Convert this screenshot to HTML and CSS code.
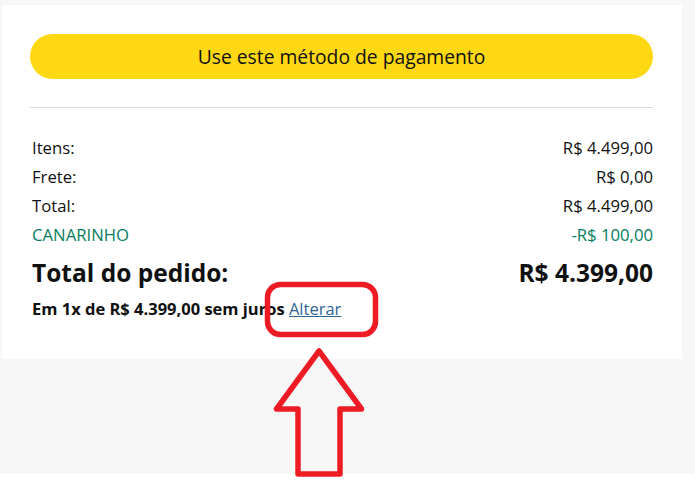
FILE: index.html
```html
<!DOCTYPE html>
<html lang="pt-BR">
<head>
    <meta charset="UTF-8">
    <meta name="viewport" content="width=device-width, initial-scale=1.0">
    <title>Resumo do pedido</title>
    <link rel="stylesheet" href="styles.css">
</head>
<body>
    <div class="page">
        <div class="summary">
            <button class="pay-button">Use este método de pagamento</button>
            <hr class="divider">

            <div class="line"><span>Itens:</span><span>R$ 4.499,00</span></div>
            <div class="line"><span>Frete:</span><span>R$ 0,00</span></div>
            <div class="line"><span>Total:</span><span>R$ 4.499,00</span></div>
            <div class="line promo"><span>CANARINHO</span><span>-R$ 100,00</span></div>

            <div class="line grand-total"><span>Total do pedido:</span><span>R$ 4.399,00</span></div>
            <p class="installments">Em 1x de R$ 4.399,00 sem juros <a href="#">Alterar</a></p>
        </div>
        <div class="gap"></div>
        <div class="footer"></div>

        <!-- marcação em vermelho apontando para o link "Alterar" -->
        <svg class="markup" width="695" height="500" viewBox="0 0 695 500">
            <rect x="267.5" y="284.5" width="108" height="50" rx="13" />
            <path d="M319 351 L276.5 409 L298 409 L298 474 L340 474 L340 409 L361.5 409 Z" />
        </svg>
    </div>
</body>
</html>
```

FILE: styles.css
```css
body {
    margin: 0;
    background: #f7f7f7;
    font-family: "Open Sans", "Noto Sans", Arial, sans-serif;
    color: #0f1111;
}
.page {
    position: relative;
    width: 695px;
    height: 500px;
    overflow: hidden;
}
.summary {
    background: #fff;
    margin: 5px 0 0 2px;
    width: 680px;
    height: 354px;
    box-sizing: border-box;
    padding: 29px 29px 0 28px;
}
.pay-button {
    display: block;
    width: 100%;
    height: 45px;
    border: none;
    border-radius: 23px;
    background: #ffd814;
    font-family: inherit;
    font-size: 19.3px;
    color: #0f1111;
    cursor: pointer;
}
.divider {
    border: none;
    border-top: 1px solid #d5d9d9;
    margin: 28px 0 25px;
}
.line {
    display: flex;
    justify-content: space-between;
    font-size: 16.7px;
    line-height: 29px;
    padding-left: 2px;
}
.promo {
    color: #067d62;
}
.grand-total {
    margin-top: 8px;
    font-size: 24.5px;
    font-weight: bold;
    line-height: 32px;
}
.installments {
    margin: 10px 0 0 2px;
    font-size: 16.5px;
    font-weight: bold;
    line-height: 20px;
}
.installments a {
    font-weight: normal;
    color: #2f6594;
}
.gap {
    height: 115px;
}
.footer {
    background: #fff;
    height: 30px;
}
.markup {
    position: absolute;
    top: 0;
    left: 0;
    pointer-events: none;
}
.markup rect,
.markup path {
    fill: none;
    stroke: #ed1c24;
    stroke-width: 5.5;
    stroke-linejoin: round;
}
```
